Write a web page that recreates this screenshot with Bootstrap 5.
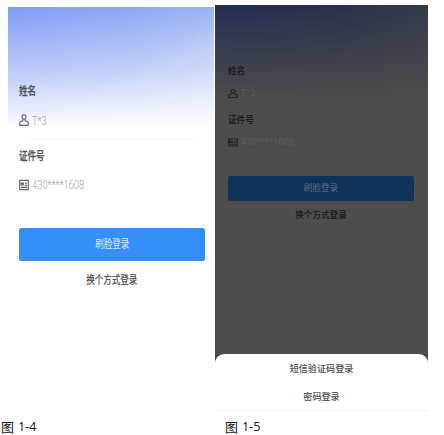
<!DOCTYPE html>
<html lang="zh-CN">
<head>
<meta charset="utf-8">
<meta name="viewport" content="width=device-width, initial-scale=1">
<title>登录</title>
<link href="https://cdn.jsdelivr.net/npm/bootstrap@5.3.0/dist/css/bootstrap.min.css" rel="stylesheet">
<style>
body{background:#fff;height:435px;overflow:hidden;font-family:"Liberation Sans","Noto Sans CJK SC",sans-serif}
.phone{height:404px;line-height:1}
.phone-a{width:206px;margin:7px 1px 0 8px;padding:74px 9px 0 11px;
 background:linear-gradient(to bottom,rgba(255,255,255,0),rgba(255,255,255,.45) 62px,#fff 122px),linear-gradient(152deg,transparent 110px,rgba(255,255,255,.12) 134px,rgba(255,255,255,.05) 136px,rgba(255,255,255,.18) 165px),linear-gradient(90deg,#829bf6,#8ea7f4 60%,#9cb3f3)}
.phone-b{width:213px;height:406px;margin-top:5px;
 background:linear-gradient(to bottom,rgba(77,77,77,0),rgba(77,77,77,.55) 50px,#4d4d4d 98px),linear-gradient(90deg,#232d52,#28304b 60%,#343a4b)}
.form-b{height:349px;padding:56px 14px 0 13px}
.tx{display:inline-block;white-space:nowrap}
.phone-a .tx{font-size:11.6px;transform:scaleX(.735);transform-origin:0 50%}
.phone-a .mid .tx{transform-origin:50% 50%}
.phone-b .tx{font-size:8.6px}
.lbl{color:#4c4f57;font-weight:500}
.phone-a .tx.lbl{-webkit-text-stroke:.25px #4c4f57}
.phone-b .lbl{color:#1c1d20;font-weight:700}
.val{font-family:Roboto,"Liberation Sans",sans-serif;font-weight:300;color:#a6a9b0}
.phone-a .tx.val{font-size:13px;transform:scaleX(.72)}
.phone-b .tx.val{font-size:9.6px;color:#626365}
.phone-a .lab-row{height:20px}
.phone-a .val-row{height:38px}
.phone-a .rule{height:1px;margin:0 8px;background:#f3f4f6}
.phone-b .lab-row{height:20px}
.phone-b .val-row{height:24px}
.phone-b .rule{height:1px;margin:0 8px;background:#494949}
.ico{width:10px;height:12px;fill:none;stroke:#5f6b77;stroke-width:1.2;flex:none;margin-right:2.5px}
.phone-b .ico{height:9px;stroke:#242628;stroke-width:1.4}
.gap-a{margin-top:5.5px}
.go{border:0;border-radius:2.5px;padding:0;width:100%}
.phone-a .go{height:33px;margin-top:24px;background:#368ff8;color:#dcecff}
.phone-b .go{height:24.5px;margin-top:22px;background:#0f3258;color:#5c7187}
.alt-row{color:#434446;height:20px}
.phone-a .alt-row{margin-top:9.5px}
.phone-a .alt-row .tx{-webkit-text-stroke:.2px #434446}
.phone-b .alt-row{margin-top:4.5px;color:#181818}
.phone-b .alt-row .tx{font-weight:500}
.sheet{height:57px;padding-top:1.5px;border-radius:9px 9px 0 0;background:#fff;color:#4c4c4c;border-bottom:1px solid #f4f4f4}
.under{background:#4d4d4d}
.sheet .opt{height:28px}
.phone-b .sheet .tx{font-size:9.1px;font-weight:500}
.cap{font-family:"Open Sans","Noto Sans CJK SC",sans-serif;font-size:12.6px;line-height:24px;color:#111;gap:5px;height:24px;padding-top:7px}
.cap .zh{font-size:13px;width:12px;font-family:"Noto Sans CJK SC",sans-serif}
.cap-a{width:225px;padding-left:1px}
</style>
<script src="https://cdn.jsdelivr.net/npm/bootstrap@5.3.0/dist/js/bootstrap.bundle.min.js"></script>
</head>
<body>
<svg class="d-none">
 <symbol id="user" viewBox="0 0 10 12" preserveAspectRatio="none"><ellipse cx="5" cy="3.1" rx="2" ry="2.3"/><path d="M3.8 5.4v1.5L1.6 7.5Q.8 7.8.8 8.8v2.5h8.4V8.8q0-1-.8-1.3L6.2 6.9V5.4"/></symbol>
 <symbol id="idcard" viewBox="0 0 10 12" preserveAspectRatio="none"><path d="M.7 1.4h8.6v9.2H.7zM2.2 4.2h2.2v1.7H2.2zM5.8 4.2h2.1M5.8 6.3h2.1M2 8.4h6"/></symbol>
</svg>
<main class="d-flex">
 <section class="phone phone-a">
  <div class="lab-row d-flex align-items-center"><span class="tx lbl">姓名</span></div>
  <div class="val-row d-flex align-items-center"><svg class="ico"><use href="#user"/></svg><span class="tx val">T*3</span></div>
  <div class="rule"></div>
  <div class="lab-row d-flex align-items-center gap-a"><span class="tx lbl">证件号</span></div>
  <div class="val-row d-flex align-items-center"><svg class="ico"><use href="#idcard"/></svg><span class="tx val">430****1608</span></div>
  <button class="go mid d-flex align-items-center justify-content-center"><span class="tx">刷脸登录</span></button>
  <div class="alt-row mid d-flex align-items-center justify-content-center"><span class="tx">换个方式登录</span></div>
 </section>
 <section class="phone phone-b">
  <div class="form-b">
   <div class="lab-row d-flex align-items-center"><span class="tx lbl">姓名</span></div>
   <div class="val-row d-flex align-items-center"><svg class="ico"><use href="#user"/></svg><span class="tx val">T*3</span></div>
   <div class="rule"></div>
   <div class="lab-row d-flex align-items-center mt-1"><span class="tx lbl">证件号</span></div>
   <div class="val-row d-flex align-items-center"><svg class="ico"><use href="#idcard"/></svg><span class="tx val">430****1608</span></div>
   <button class="go d-flex align-items-center justify-content-center"><span class="tx">刷脸登录</span></button>
   <div class="alt-row d-flex align-items-center justify-content-center"><span class="tx">换个方式登录</span></div>
  </div>
  <div class="under"><div class="sheet">
   <div class="opt d-flex align-items-center justify-content-center"><span class="tx">短信验证码登录</span></div>
   <div class="opt d-flex align-items-center justify-content-center"><span class="tx">密码登录</span></div>
  </div></div>
 </section>
</main>
<footer class="d-flex">
 <div class="cap cap-a d-flex align-items-center"><span class="zh">图</span><span>1-4</span></div>
 <div class="cap d-flex align-items-center"><span class="zh">图</span><span>1-5</span></div>
</footer>
</body>
</html>
